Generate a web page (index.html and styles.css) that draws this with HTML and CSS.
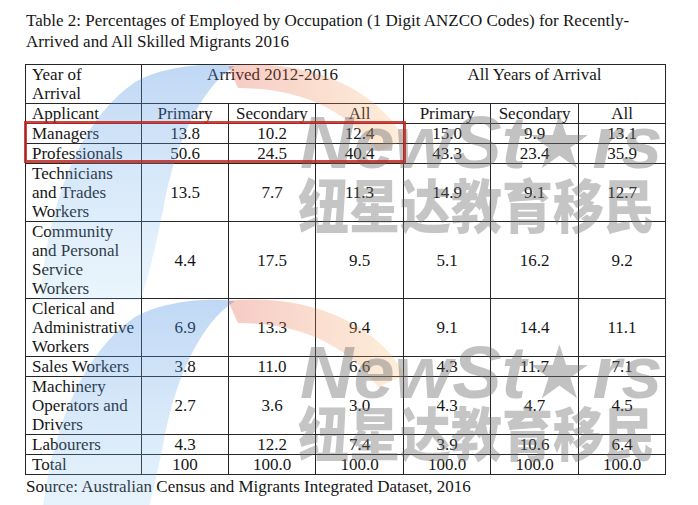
FILE: index.html
```html
<!DOCTYPE html>
<html>
<head>
<meta charset="utf-8">
<title>Table 2</title>
<link rel="stylesheet" href="styles.css">
</head>
<body>
<div class="page">
  <p class="caption">Table 2: Percentages of Employed by Occupation (1 Digit ANZCO Codes) for Recently-<br>Arrived and All Skilled Migrants 2016</p>
  <table class="data">
    <colgroup>
      <col class="c-label"><col class="c-num"><col class="c-num"><col class="c-num2"><col class="c-num"><col class="c-num2"><col class="c-num">
    </colgroup>
    <tr><td class="label">Year of<br>Arrival</td><td colspan="3" class="group">Arrived 2012-2016</td><td colspan="3" class="group">All Years of Arrival</td></tr>
    <tr><td class="label">Applicant</td><td>Primary</td><td>Secondary</td><td>All</td><td>Primary</td><td>Secondary</td><td>All</td></tr>
    <tr><td class="label">Managers</td><td>13.8</td><td>10.2</td><td>12.4</td><td>15.0</td><td>9.9</td><td>13.1</td></tr>
    <tr><td class="label">Professionals</td><td>50.6</td><td>24.5</td><td>40.4</td><td>43.3</td><td>23.4</td><td>35.9</td></tr>
    <tr><td class="label">Technicians<br>and Trades<br>Workers</td><td>13.5</td><td>7.7</td><td>11.3</td><td>14.9</td><td>9.1</td><td>12.7</td></tr>
    <tr><td class="label">Community<br>and Personal<br>Service<br>Workers</td><td>4.4</td><td>17.5</td><td>9.5</td><td>5.1</td><td>16.2</td><td>9.2</td></tr>
    <tr><td class="label">Clerical and<br>Administrative<br>Workers</td><td>6.9</td><td>13.3</td><td>9.4</td><td>9.1</td><td>14.4</td><td>11.1</td></tr>
    <tr><td class="label">Sales Workers</td><td>3.8</td><td>11.0</td><td>6.6</td><td>4.3</td><td>11.7</td><td>7.1</td></tr>
    <tr><td class="label">Machinery<br>Operators and<br>Drivers</td><td>2.7</td><td>3.6</td><td>3.0</td><td>4.3</td><td>4.7</td><td>4.5</td></tr>
    <tr><td class="label">Labourers</td><td>4.3</td><td>12.2</td><td>7.4</td><td>3.9</td><td>10.6</td><td>6.4</td></tr>
    <tr><td class="label">Total</td><td>100</td><td>100.0</td><td>100.0</td><td>100.0</td><td>100.0</td><td>100.0</td></tr>
  </table>
  <p class="source">Source: Australian Census and Migrants Integrated Dataset, 2016</p>

  <svg class="logo logo-1" viewBox="0 0 370 250" width="370" height="250" aria-hidden="true">
    <defs>
      <linearGradient id="blue1" x1="0" y1="0" x2="0" y2="1">
        <stop offset="0" stop-color="rgb(70,140,225)" stop-opacity="0.34"/>
        <stop offset="1" stop-color="rgb(140,200,240)" stop-opacity="0.18"/>
      </linearGradient>
      <linearGradient id="orange1" x1="0" y1="0" x2="1" y2="0">
        <stop offset="0" stop-color="rgb(225,80,60)" stop-opacity="0.30"/>
        <stop offset="1" stop-color="rgb(250,185,100)" stop-opacity="0.24"/>
      </linearGradient>
    </defs>
    <path d="M 0 240 C 8 140, 40 60, 95 22 C 120 8, 160 2, 195 6 C 160 28, 135 85, 124 145 C 116 185, 108 220, 100 240 Z" fill="url(#blue1)"/>
    <path d="M 188 6 C 262 -2, 335 25, 365 80 L 338 92 C 306 48, 258 28, 198 28 Z" fill="url(#orange1)"/>
  </svg>
  <svg class="logo logo-2" viewBox="0 0 370 250" width="370" height="250" aria-hidden="true">
    <path d="M 0 240 C 8 140, 40 60, 95 22 C 120 8, 160 2, 195 6 C 160 28, 135 85, 124 145 C 116 185, 108 220, 100 240 Z" fill="url(#blue1)"/>
    <path d="M 188 6 C 262 -2, 335 25, 365 80 L 338 92 C 306 48, 258 28, 198 28 Z" fill="url(#orange1)"/>
  </svg>

  <span class="mark-en mark-en-1">NewSt★rs</span>
  <span class="mark-cn mark-cn-1">纽星达教育移民</span>
  <span class="mark-en mark-en-2">NewSt★rs</span>
  <span class="mark-cn mark-cn-2">纽星达教育移民</span>

  <div class="highlight"></div>
</div>
</body>
</html>
```
FILE: styles.css
```css
html, body {
  margin: 0;
  padding: 0;
  background: #ffffff;
}

.page {
  position: relative;
  width: 698px;
  height: 505px;
  overflow: hidden;
  box-sizing: border-box;
  padding: 11px 0 0 25px;
  font-family: "Liberation Serif", "Times New Roman", serif;
  color: #161616;
}

.caption {
  margin: 0 0 12px 1px;
  font-family: "Liberation Serif", "Times New Roman", serif;
  font-size: 17px;
  line-height: 20.5px;
  white-space: nowrap;
}

.data {
  border-collapse: collapse;
  table-layout: fixed;
  width: 641px;
  font-family: "Liberation Serif", "Times New Roman", serif;
  font-size: 17px;
  line-height: 19px;
}

.c-label { width: 116px; }
.c-num { width: 87px; }
.c-num2 { width: 88px; }

.data td {
  border: 1px solid #262626;
  padding: 0;
  font-family: "Liberation Serif", "Times New Roman", serif;
  text-align: center;
  vertical-align: middle;
  white-space: nowrap;
  overflow: hidden;
}

.data td.label {
  text-align: left;
  padding-left: 6px;
}

.data td.group {
  vertical-align: top;
}

.source {
  margin: 2px 0 0 1px;
  font-family: "Liberation Serif", "Times New Roman", serif;
  font-size: 17px;
  line-height: 19px;
  white-space: nowrap;
}

.logo {
  position: absolute;
  left: 40px;
  pointer-events: none;
}
.logo-1 { top: 60px; }
.logo-2 { top: 295px; }

.mark-en {
  position: absolute;
  left: 300px;
  font-family: "Liberation Sans", "DejaVu Sans", sans-serif;
  font-weight: bold;
  font-style: italic;
  font-size: 74px;
  line-height: 74px;
  color: rgba(110, 110, 110, 0.42);
  white-space: nowrap;
  pointer-events: none;
}
.mark-en-1 { top: 106px; }
.mark-en-2 { top: 336px; }

.mark-cn {
  position: absolute;
  left: 298px;
  font-family: "Noto Sans CJK SC", sans-serif;
  font-weight: 900;
  font-size: 51px;
  line-height: 51px;
  color: rgba(110, 110, 110, 0.40);
  white-space: nowrap;
  transform: scaleY(1.14);
  transform-origin: 0 0;
  pointer-events: none;
}
.mark-cn-1 { top: 174px; }
.mark-cn-2 { top: 402px; }

.highlight {
  position: absolute;
  left: 24px;
  top: 121px;
  width: 382px;
  height: 42px;
  box-sizing: border-box;
  border: 3.5px solid rgba(192, 40, 34, 0.85);
  pointer-events: none;
}
```
